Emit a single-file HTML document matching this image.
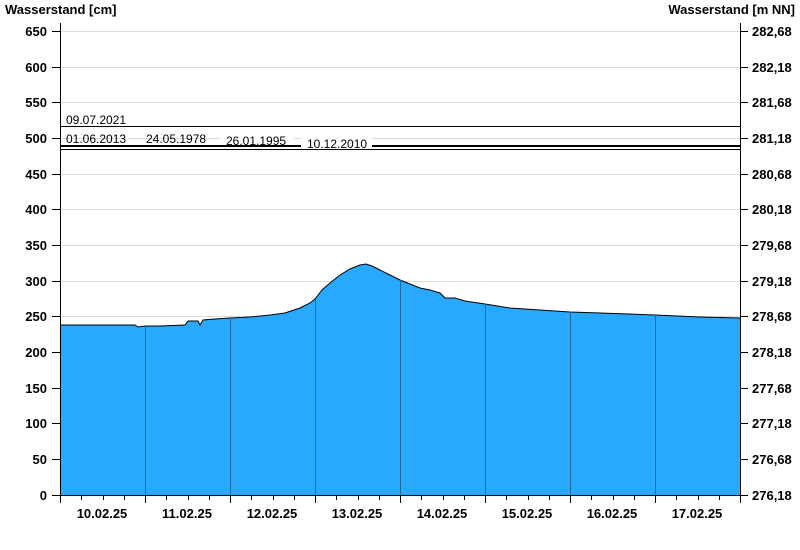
<!DOCTYPE html>
<html><head><meta charset="utf-8"><style>
html,body{margin:0;padding:0;background:#fff;}
svg{display:block;}
text{font-family:"Liberation Sans",Arial,sans-serif;}
.b{font-weight:bold;font-size:13px;fill:#000;}
.s{font-size:12px;fill:#000;}
</style></head><body>
<svg width="800" height="550" viewBox="0 0 800 550" xmlns="http://www.w3.org/2000/svg">
<rect width="800" height="550" fill="#fff"/>
<g stroke="#dcdcdc" stroke-width="1">
<line x1="60" x2="740" y1="31.5" y2="31.5"/><line x1="60" x2="740" y1="67.5" y2="67.5"/><line x1="60" x2="740" y1="102.5" y2="102.5"/><line x1="60" x2="740" y1="138.5" y2="138.5"/><line x1="60" x2="740" y1="174.5" y2="174.5"/><line x1="60" x2="740" y1="209.5" y2="209.5"/><line x1="60" x2="740" y1="245.5" y2="245.5"/><line x1="60" x2="740" y1="281.5" y2="281.5"/><line x1="60" x2="740" y1="316.5" y2="316.5"/><line x1="60" x2="740" y1="352.5" y2="352.5"/><line x1="60" x2="740" y1="388.5" y2="388.5"/><line x1="60" x2="740" y1="423.5" y2="423.5"/><line x1="60" x2="740" y1="459.5" y2="459.5"/>
</g>
<path d="M60,325 L135,325 L138,327 L145,326 L160,326 L185,325 L188,321 L198,321 L200,325 L203,320 L215,319 L230,318 L250,317 L270,315 L285,313 L300,308 L310,303 L315,299 L322,290 L330,283 L340,275 L350,269 L360,265 L366,264 L372,266 L380,270 L390,275 L400,280 L410,284 L420,288 L430,290 L440,293 L445,298 L455,298 L465,301 L485,304 L510,308 L540,310 L570,312 L600,313 L655,315 L700,317 L740,318 L740,495 L60,495 Z" fill="#29a8ff"/>
<path d="M60,325 L135,325 L138,327 L145,326 L160,326 L185,325 L188,321 L198,321 L200,325 L203,320 L215,319 L230,318 L250,317 L270,315 L285,313 L300,308 L310,303 L315,299 L322,290 L330,283 L340,275 L350,269 L360,265 L366,264 L372,266 L380,270 L390,275 L400,280 L410,284 L420,288 L430,290 L440,293 L445,298 L455,298 L465,301 L485,304 L510,308 L540,310 L570,312 L600,313 L655,315 L700,317 L740,318" fill="none" stroke="#000" stroke-width="1"/>
<g stroke="#1e6a9c" stroke-width="1">
<line x1="145.5" x2="145.5" y1="326" y2="495"/><line x1="230.5" x2="230.5" y1="318" y2="495"/><line x1="315.5" x2="315.5" y1="299" y2="495"/><line x1="400.5" x2="400.5" y1="280" y2="495"/><line x1="485.5" x2="485.5" y1="304" y2="495"/><line x1="570.5" x2="570.5" y1="312" y2="495"/><line x1="655.5" x2="655.5" y1="315" y2="495"/>
</g>
<line x1="60" x2="740" y1="126.5" y2="126.5" stroke="#000"/>
<line x1="60" x2="740" y1="146" y2="146" stroke="#000" stroke-width="2"/>
<line x1="60" x2="740" y1="149.5" y2="149.5" stroke="#000"/>
<rect x="220" y="136" width="74" height="9" fill="#fff"/>
<rect x="301" y="138" width="71" height="11" fill="#fff"/>
<text class="s" x="66" y="124">09.07.2021</text>
<text class="s" x="66" y="143">01.06.2013</text>
<text class="s" x="146" y="143">24.05.1978</text>
<text class="s" x="226" y="145">26.01.1995</text>
<text class="s" x="307" y="148">10.12.2010</text>
<g stroke="#000" stroke-width="1" fill="none">
<line x1="60.5" x2="60.5" y1="23" y2="495"/><line x1="740.5" x2="740.5" y1="23" y2="495"/><line x1="60" x2="741" y1="495.5" y2="495.5"/>
</g>
<g stroke="#000" stroke-width="1">
<line x1="52" x2="60" y1="31.5" y2="31.5"/><line x1="52" x2="60" y1="67.5" y2="67.5"/><line x1="52" x2="60" y1="102.5" y2="102.5"/><line x1="52" x2="60" y1="138.5" y2="138.5"/><line x1="52" x2="60" y1="174.5" y2="174.5"/><line x1="52" x2="60" y1="209.5" y2="209.5"/><line x1="52" x2="60" y1="245.5" y2="245.5"/><line x1="52" x2="60" y1="281.5" y2="281.5"/><line x1="52" x2="60" y1="316.5" y2="316.5"/><line x1="52" x2="60" y1="352.5" y2="352.5"/><line x1="52" x2="60" y1="388.5" y2="388.5"/><line x1="52" x2="60" y1="423.5" y2="423.5"/><line x1="52" x2="60" y1="459.5" y2="459.5"/><line x1="52" x2="60" y1="495.5" y2="495.5"/>
<line x1="740" x2="748" y1="31.5" y2="31.5"/><line x1="740" x2="748" y1="67.5" y2="67.5"/><line x1="740" x2="748" y1="102.5" y2="102.5"/><line x1="740" x2="748" y1="138.5" y2="138.5"/><line x1="740" x2="748" y1="174.5" y2="174.5"/><line x1="740" x2="748" y1="209.5" y2="209.5"/><line x1="740" x2="748" y1="245.5" y2="245.5"/><line x1="740" x2="748" y1="281.5" y2="281.5"/><line x1="740" x2="748" y1="316.5" y2="316.5"/><line x1="740" x2="748" y1="352.5" y2="352.5"/><line x1="740" x2="748" y1="388.5" y2="388.5"/><line x1="740" x2="748" y1="423.5" y2="423.5"/><line x1="740" x2="748" y1="459.5" y2="459.5"/><line x1="740" x2="748" y1="495.5" y2="495.5"/>
<line x1="60.5" x2="60.5" y1="495" y2="503"/><line x1="145.5" x2="145.5" y1="495" y2="503"/><line x1="230.5" x2="230.5" y1="495" y2="503"/><line x1="315.5" x2="315.5" y1="495" y2="503"/><line x1="400.5" x2="400.5" y1="495" y2="503"/><line x1="485.5" x2="485.5" y1="495" y2="503"/><line x1="570.5" x2="570.5" y1="495" y2="503"/><line x1="655.5" x2="655.5" y1="495" y2="503"/><line x1="740.5" x2="740.5" y1="495" y2="503"/>
<line x1="81.5" x2="81.5" y1="495" y2="500"/><line x1="103.5" x2="103.5" y1="495" y2="500"/><line x1="124.5" x2="124.5" y1="495" y2="500"/>
<line x1="166.5" x2="166.5" y1="495" y2="500"/><line x1="188.5" x2="188.5" y1="495" y2="500"/><line x1="209.5" x2="209.5" y1="495" y2="500"/>
<line x1="251.5" x2="251.5" y1="495" y2="500"/><line x1="273.5" x2="273.5" y1="495" y2="500"/><line x1="294.5" x2="294.5" y1="495" y2="500"/>
<line x1="336.5" x2="336.5" y1="495" y2="500"/><line x1="358.5" x2="358.5" y1="495" y2="500"/><line x1="379.5" x2="379.5" y1="495" y2="500"/>
<line x1="421.5" x2="421.5" y1="495" y2="500"/><line x1="443.5" x2="443.5" y1="495" y2="500"/><line x1="464.5" x2="464.5" y1="495" y2="500"/>
<line x1="506.5" x2="506.5" y1="495" y2="500"/><line x1="528.5" x2="528.5" y1="495" y2="500"/><line x1="549.5" x2="549.5" y1="495" y2="500"/>
<line x1="591.5" x2="591.5" y1="495" y2="500"/><line x1="613.5" x2="613.5" y1="495" y2="500"/><line x1="634.5" x2="634.5" y1="495" y2="500"/>
<line x1="676.5" x2="676.5" y1="495" y2="500"/><line x1="698.5" x2="698.5" y1="495" y2="500"/><line x1="719.5" x2="719.5" y1="495" y2="500"/>
</g>
<text class="b" x="5" y="14">Wasserstand [cm]</text>
<text class="b" x="795" y="14" text-anchor="end">Wasserstand [m NN]</text>
<g text-anchor="end">
<text class="b" x="47" y="36">650</text><text class="b" x="47" y="72">600</text><text class="b" x="47" y="107">550</text><text class="b" x="47" y="143">500</text><text class="b" x="47" y="179">450</text><text class="b" x="47" y="214">400</text><text class="b" x="47" y="250">350</text><text class="b" x="47" y="286">300</text><text class="b" x="47" y="321">250</text><text class="b" x="47" y="357">200</text><text class="b" x="47" y="393">150</text><text class="b" x="47" y="428">100</text><text class="b" x="47" y="464">50</text><text class="b" x="47" y="500">0</text>
</g>
<g>
<text class="b" x="752" y="36">282,68</text><text class="b" x="752" y="72">282,18</text><text class="b" x="752" y="107">281,68</text><text class="b" x="752" y="143">281,18</text><text class="b" x="752" y="179">280,68</text><text class="b" x="752" y="214">280,18</text><text class="b" x="752" y="250">279,68</text><text class="b" x="752" y="286">279,18</text><text class="b" x="752" y="321">278,68</text><text class="b" x="752" y="357">278,18</text><text class="b" x="752" y="393">277,68</text><text class="b" x="752" y="428">277,18</text><text class="b" x="752" y="464">276,68</text><text class="b" x="752" y="500">276,18</text>
</g>
<g text-anchor="middle">
<text class="b" x="102" y="518">10.02.25</text><text class="b" x="187" y="518">11.02.25</text><text class="b" x="272" y="518">12.02.25</text><text class="b" x="357" y="518">13.02.25</text><text class="b" x="442" y="518">14.02.25</text><text class="b" x="527" y="518">15.02.25</text><text class="b" x="612" y="518">16.02.25</text><text class="b" x="697" y="518">17.02.25</text>
</g>
</svg>
</body></html>
